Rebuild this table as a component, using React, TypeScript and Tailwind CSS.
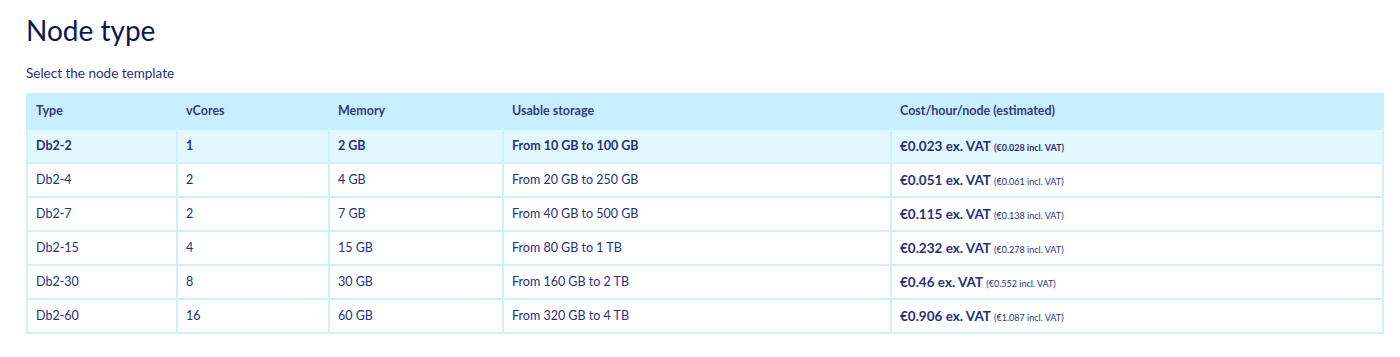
import React from 'react';

const rows = [
  { type: 'Db2-2', vcores: '1', memory: '2 GB', storage: 'From 10 GB to 100 GB', cost: '€0.023', incl: '€0.028', selected: true },
  { type: 'Db2-4', vcores: '2', memory: '4 GB', storage: 'From 20 GB to 250 GB', cost: '€0.051', incl: '€0.061' },
  { type: 'Db2-7', vcores: '2', memory: '7 GB', storage: 'From 40 GB to 500 GB', cost: '€0.115', incl: '€0.138' },
  { type: 'Db2-15', vcores: '4', memory: '15 GB', storage: 'From 80 GB to 1 TB', cost: '€0.232', incl: '€0.278' },
  { type: 'Db2-30', vcores: '8', memory: '30 GB', storage: 'From 160 GB to 2 TB', cost: '€0.46', incl: '€0.552' },
  { type: 'Db2-60', vcores: '16', memory: '60 GB', storage: 'From 320 GB to 4 TB', cost: '€0.906', incl: '€1.087' },
];

export default function App() {
  return (
    <div className="min-h-screen bg-white px-[26px] pt-[12px] font-['Lato',sans-serif] text-[#28307a]">
      <h1 className="text-[28px] leading-[36px] text-[#0b1657]">Node type</h1>
      <p className="mt-[17px] text-[13.5px] leading-[16px]">Select the node template</p>

      <table className="mt-[12px] w-[1358px] table-fixed border-collapse text-[12.5px]">
        <colgroup>
          <col className="w-[150px]" />
          <col className="w-[152px]" />
          <col className="w-[174px]" />
          <col className="w-[388px]" />
          <col />
        </colgroup>
        <thead>
          <tr className="h-[35px] bg-[#c8efff] text-left font-bold text-[#343c7c]">
            <th className="border-2 border-[#c8efff] px-2">Type</th>
            <th className="border-2 border-[#c8efff] px-2">vCores</th>
            <th className="border-2 border-[#c8efff] px-2">Memory</th>
            <th className="border-2 border-[#c8efff] px-2">Usable storage</th>
            <th className="border-2 border-[#c8efff] px-2">Cost/hour/node (estimated)</th>
          </tr>
        </thead>
        <tbody>
          {rows.map((r) => (
            <tr
              key={r.type}
              className={r.selected ? 'h-[34px] bg-[#e3f7ff] font-bold' : 'h-[34px] bg-white'}
            >
              <td className="border-2 border-[#cdf1ff] px-2">{r.type}</td>
              <td className="border-2 border-[#cdf1ff] px-2">{r.vcores}</td>
              <td className="border-2 border-[#cdf1ff] px-2">{r.memory}</td>
              <td className="border-2 border-[#cdf1ff] px-2">{r.storage}</td>
              <td className="border-2 border-[#cdf1ff] px-2">
                <span className="text-[13.5px] font-bold">{r.cost} ex. VAT</span>{' '}
                <span className="text-[9px]">({r.incl} incl. VAT)</span>
              </td>
            </tr>
          ))}
        </tbody>
      </table>
    </div>
  );
}
